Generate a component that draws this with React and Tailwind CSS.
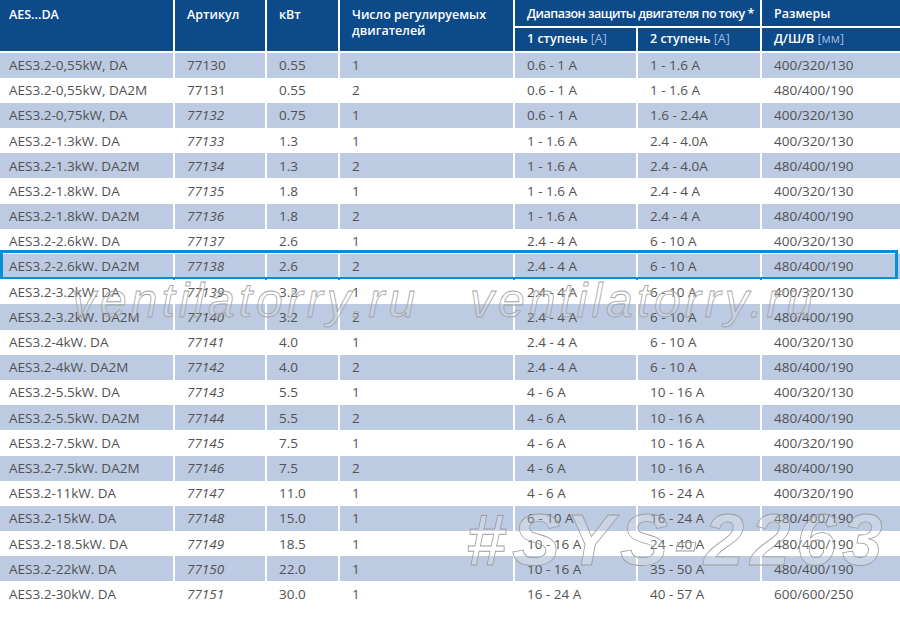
import React from 'react'

const rows = [
  ['AES3.2-0,55kW, DA', '77130', '0.55', '1', '0.6 - 1 A', '1 - 1.6 A', '400/320/130'],
  ['AES3.2-0,55kW, DA2M', '77131', '0.55', '2', '0.6 - 1 A', '1 - 1.6 A', '480/400/190'],
  ['AES3.2-0,75kW, DA', '77132', '0.75', '1', '0.6 - 1 A', '1.6 - 2.4A', '400/320/130'],
  ['AES3.2-1.3kW. DA', '77133', '1.3', '1', '1 - 1.6 A', '2.4 - 4.0A', '400/320/130'],
  ['AES3.2-1.3kW. DA2M', '77134', '1.3', '2', '1 - 1.6 A', '2.4 - 4.0A', '480/400/190'],
  ['AES3.2-1.8kW. DA', '77135', '1.8', '1', '1 - 1.6 A', '2.4 - 4 A', '400/320/130'],
  ['AES3.2-1.8kW. DA2M', '77136', '1.8', '2', '1 - 1.6 A', '2.4 - 4 A', '480/400/190'],
  ['AES3.2-2.6kW. DA', '77137', '2.6', '1', '2.4 - 4 A', '6 - 10 A', '400/320/130'],
  ['AES3.2-2.6kW. DA2M', '77138', '2.6', '2', '2.4 - 4 A', '6 - 10 A', '480/400/190'],
  ['AES3.2-3.2kW. DA', '77139', '3.2', '1', '2.4 - 4 A', '6 - 10 A', '400/320/130'],
  ['AES3.2-3.2kW. DA2M', '77140', '3.2', '2', '2.4 - 4 A', '6 - 10 A', '480/400/190'],
  ['AES3.2-4kW. DA', '77141', '4.0', '1', '2.4 - 4 A', '6 - 10 A', '400/320/130'],
  ['AES3.2-4kW. DA2M', '77142', '4.0', '2', '2.4 - 4 A', '6 - 10 A', '480/400/190'],
  ['AES3.2-5.5kW. DA', '77143', '5.5', '1', '4 - 6 A', '10 - 16 A', '400/320/130'],
  ['AES3.2-5.5kW. DA2M', '77144', '5.5', '2', '4 - 6 A', '10 - 16 A', '480/400/190'],
  ['AES3.2-7.5kW. DA', '77145', '7.5', '1', '4 - 6 A', '10 - 16 A', '400/320/190'],
  ['AES3.2-7.5kW. DA2M', '77146', '7.5', '2', '4 - 6 A', '10 - 16 A', '480/400/190'],
  ['AES3.2-11kW. DA', '77147', '11.0', '1', '4 - 6 A', '16 - 24 A', '400/320/190'],
  ['AES3.2-15kW. DA', '77148', '15.0', '1', '6 - 10 A', '16 - 24 A', '480/400/190'],
  ['AES3.2-18.5kW. DA', '77149', '18.5', '1', '10 - 16 A', '24 - 40 A', '480/400/190'],
  ['AES3.2-22kW. DA', '77150', '22.0', '1', '10 - 16 A', '35 - 50 A', '480/400/190'],
  ['AES3.2-30kW. DA', '77151', '30.0', '1', '16 - 24 A', '40 - 57 A', '600/600/250'],
]

const cols = 'grid grid-cols-[173px_90px_71px_173px_121px_122px_138px] gap-x-[2px]'

const Unit = ({ children }) => (
  <span className="font-normal text-[#a3bbdd]">{children}</span>
)

export default function App() {
  return (
    <div className="relative w-[900px] h-[618px] bg-white overflow-hidden font-['Open_Sans',sans-serif] text-[13.5px]">
      {/* header */}
      <div className={`${cols} grid-rows-[25.5px_23px] gap-y-[2px] text-white font-semibold text-[12.5px] leading-4 whitespace-nowrap`}>
        <div className="row-span-2 bg-[#0c4a8a] pl-[9px] pt-[7px]">AES...DA</div>
        <div className="row-span-2 bg-[#0c4a8a] pl-3 pt-[7px]">Артикул</div>
        <div className="row-span-2 bg-[#0c4a8a] pl-3 pt-[7px]">кВт</div>
        <div className="row-span-2 bg-[#0c4a8a] pl-3 pt-[7px]">
          Число регулируемых
          <br />
          двигателей
        </div>
        <div className="col-span-2 bg-[#0c4a8a] pl-3 pt-[6px] tracking-[-0.5px]">Диапазон защиты двигателя по току *</div>
        <div className="bg-[#0c4a8a] pl-3 pt-[6px]">Размеры</div>
        <div className="bg-[#0c4a8a] pl-3 flex items-center">
          1 ступень&nbsp;<Unit>[A]</Unit>
        </div>
        <div className="bg-[#0c4a8a] pl-3 flex items-center">
          2 ступень&nbsp;<Unit>[A]</Unit>
        </div>
        <div className="bg-[#0c4a8a] pl-3 flex items-center">
          Д/Ш/В&nbsp;<Unit>[мм]</Unit>
        </div>
      </div>

      {/* body */}
      <div className="mt-[2px] text-[#525252]">
        {rows.map((r, i) => {
          const bg = i % 2 === 0 ? 'bg-[#bccae2]' : 'bg-white'
          return (
            <div key={r[1]} className={`${cols} h-[25.2px] relative`}>
              {r.map((c, j) => (
                <div
                  key={j}
                  className={`${bg} flex items-center whitespace-nowrap ${j === 0 ? 'pl-[9px]' : 'pl-3'} ${
                    j === 1 && i > 1 ? 'italic' : ''
                  }`}
                >
                  {c}
                </div>
              ))}
              {i === 8 && (
                <div className="absolute left-0 -top-[4px] w-[898px] h-[30px] border-[3px] border-[#0a8ed8] pointer-events-none" />
              )}
            </div>
          )
        })}
      </div>

      {/* watermarks */}
      <div className="absolute left-[72px] top-[277px] text-[48px] leading-[48px] italic tracking-[4px] font-['Liberation_Sans',sans-serif] text-white/15 [-webkit-text-stroke:0.8px_#a3a3a3] pointer-events-none">
        ventilatorry.ru
      </div>
      <div className="absolute left-[470px] top-[277px] text-[48px] leading-[48px] italic tracking-[4px] font-['Liberation_Sans',sans-serif] text-white/15 [-webkit-text-stroke:0.8px_#a3a3a3] pointer-events-none">
        ventilatorry.ru
      </div>
      <div className="absolute left-[466px] top-[504px] text-[72px] leading-[72px] italic font-bold tracking-[6px] font-['Liberation_Sans',sans-serif] text-white/20 [-webkit-text-stroke:0.8px_#9c9c9c] pointer-events-none">
        #SYS-2263
      </div>
    </div>
  )
}
